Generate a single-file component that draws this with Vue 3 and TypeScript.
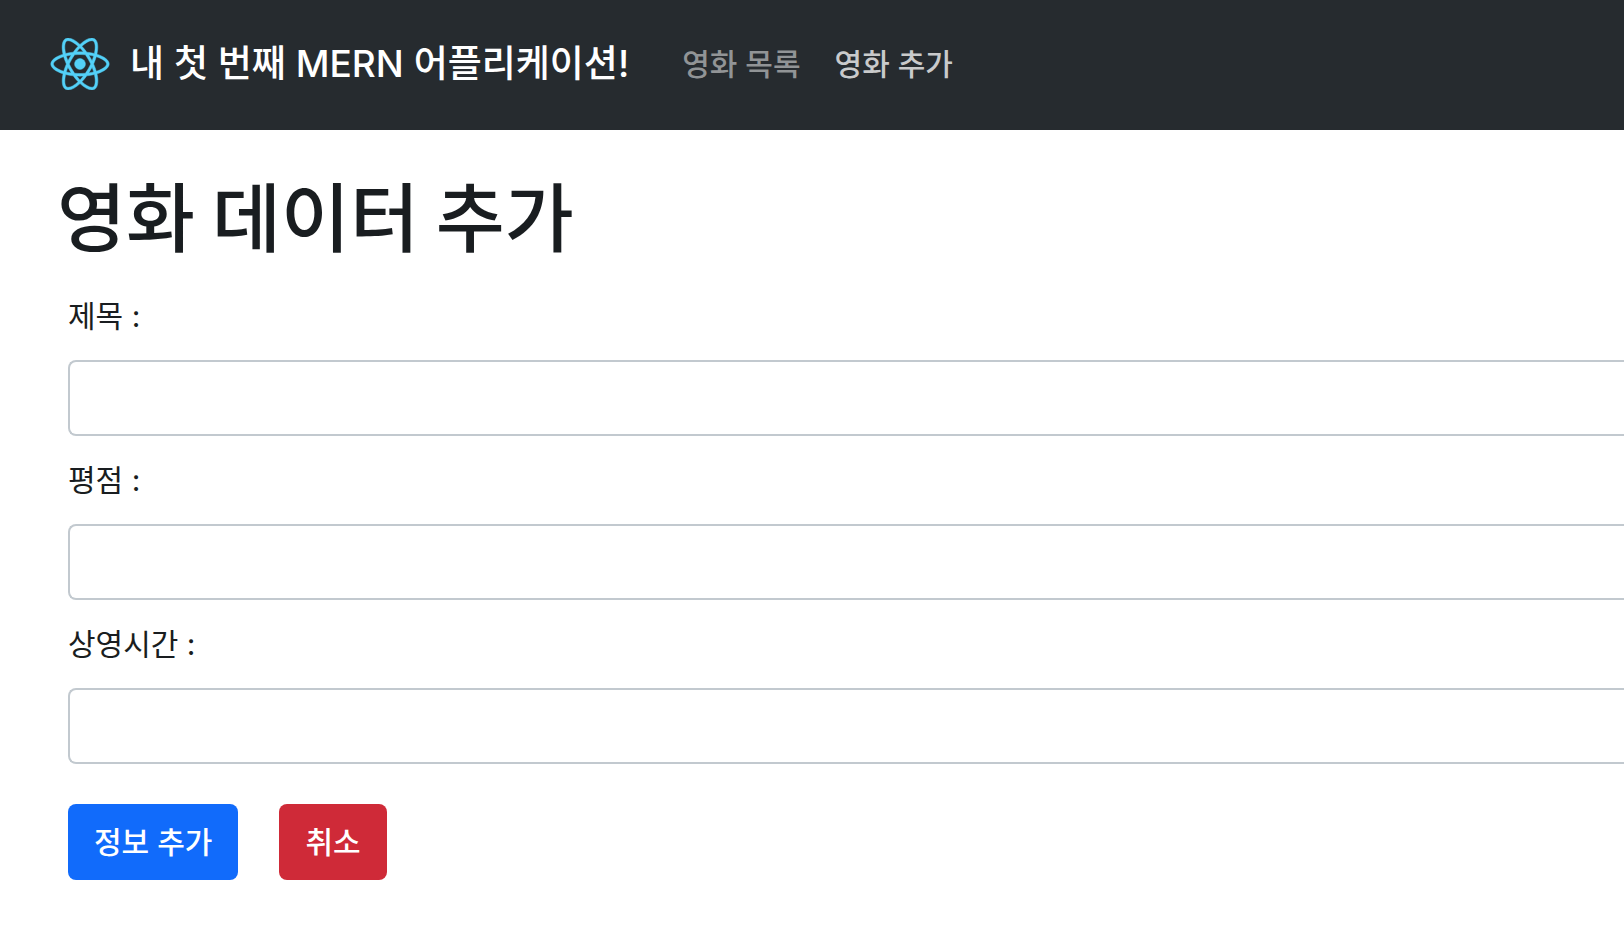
<script setup lang="ts">
import { reactive } from 'vue'

interface Field {
  id: 'name' | 'rating' | 'time'
  label: string
}

const fields: Field[] = [
  { id: 'name', label: '제목 :' },
  { id: 'rating', label: '평점 :' },
  { id: 'time', label: '상영시간 :' },
]

const movie = reactive({ name: '', rating: '', time: '' })

function reset() {
  movie.name = ''
  movie.rating = ''
  movie.time = ''
}
</script>

<template>
  <div class="page">
    <nav class="navbar">
      <a class="logo" href="#" aria-label="React">
        <svg viewBox="175 78 492 437" fill="#53d1f8" stroke="#53d1f8" stroke-width="4" aria-hidden="true">
          <path d="M666.3 296.5c0-32.5-40.7-63.3-103.1-82.4 14.4-63.6 8-114.2-20.2-130.4-6.5-3.8-14.1-5.6-22.4-5.6v22.3c4.6 0 8.3.9 11.4 2.6 13.6 7.8 19.5 37.5 14.9 75.7-1.1 9.4-2.9 19.3-5.1 29.4-19.6-4.8-41-8.5-63.5-10.9-13.5-18.5-27.5-35.3-41.6-50 32.6-30.3 63.2-46.9 84-46.9V78c-27.5 0-63.5 19.6-99.9 53.6-36.4-33.8-72.4-53.2-99.9-53.2v22.3c20.7 0 51.4 16.5 84 46.6-14 14.7-28 31.4-41.3 49.9-22.6 2.4-44 6.1-63.6 11-2.3-10-4-19.7-5.2-29-4.7-38.2 1.1-67.9 14.6-75.8 3-1.8 6.9-2.6 11.5-2.6V78.5c-8.4 0-16 1.8-22.6 5.6-28.1 16.2-34.4 66.7-19.9 130.1-62.2 19.2-102.7 49.9-102.7 82.3 0 32.5 40.7 63.3 103.1 82.4-14.4 63.6-8 114.2 20.2 130.4 6.5 3.8 14.1 5.6 22.5 5.6 27.5 0 63.5-19.6 99.9-53.6 36.4 33.8 72.4 53.2 99.9 53.2 8.4 0 16-1.8 22.6-5.6 28.1-16.2 34.4-66.7 19.9-130.1 62-19.1 102.5-49.9 102.5-82.3zm-130.2-66.7c-3.7 12.9-8.3 26.2-13.5 39.5-4.1-8-8.4-16-13.1-24-4.6-8-9.5-15.8-14.4-23.4 14.2 2.1 27.9 4.7 41 7.9zm-45.8 106.5c-7.8 13.5-15.8 26.3-24.1 38.2-14.9 1.3-30 2-45.2 2-15.1 0-30.2-.7-45-1.9-8.3-11.9-16.4-24.6-24.2-38-7.6-13.1-14.5-26.4-20.8-39.8 6.2-13.4 13.2-26.8 20.7-39.9 7.8-13.5 15.8-26.3 24.1-38.2 14.9-1.3 30-2 45.2-2 15.1 0 30.2.7 45 1.9 8.3 11.9 16.4 24.6 24.2 38 7.6 13.1 14.5 26.4 20.8 39.8-6.3 13.4-13.2 26.8-20.7 39.9zm32.3-13c5.4 13.4 10 26.8 13.8 39.8-13.1 3.2-26.9 5.9-41.2 8 4.9-7.7 9.8-15.6 14.4-23.7 4.6-8 8.9-16.1 13-24.1zM421.2 430c-9.3-9.6-18.6-20.3-27.8-32 9 .4 18.2.7 27.5.7 9.4 0 18.7-.2 27.8-.7-9 11.7-18.3 22.4-27.5 32zm-74.4-58.9c-14.2-2.1-27.9-4.7-41-7.9 3.7-12.9 8.3-26.2 13.5-39.5 4.1 8 8.4 16 13.1 24 4.7 8 9.5 15.8 14.4 23.4zM420.7 163c9.3 9.6 18.6 20.3 27.8 32-9-.4-18.2-.7-27.5-.7-9.4 0-18.7.2-27.8.7 9-11.7 18.3-22.4 27.5-32zm-74 58.9c-4.9 7.7-9.8 15.6-14.4 23.7-4.6 8-8.9 16-13 24-5.4-13.4-10-26.8-13.8-39.8 13.1-3.1 26.9-5.8 41.2-7.9zm-90.5 125.2c-35.4-15.1-58.3-34.9-58.3-50.6 0-15.7 22.9-35.6 58.3-50.6 8.6-3.7 18-7 27.7-10.1 5.7 19.6 13.2 40 22.5 60.9-9.2 20.8-16.6 41.1-22.2 60.6-9.9-3.1-19.3-6.5-28-10.2zM310 490c-13.6-7.8-19.5-37.5-14.9-75.7 1.1-9.4 2.9-19.3 5.1-29.4 19.6 4.8 41 8.5 63.5 10.9 13.5 18.5 27.5 35.3 41.6 50-32.6 30.3-63.2 46.9-84 46.9-4.5-.1-8.3-1-11.3-2.7zm237.2-76.2c4.7 38.2-1.1 67.9-14.6 75.8-3 1.8-6.9 2.6-11.5 2.6-20.7 0-51.4-16.5-84-46.6 14-14.7 28-31.4 41.3-49.9 22.6-2.4 44-6.1 63.6-11 2.3 10.1 4.1 19.8 5.2 29.1zm38.5-66.7c-8.6 3.7-18 7-27.7 10.1-5.7-19.6-13.2-40-22.5-60.9 9.2-20.8 16.6-41.1 22.2-60.6 9.9 3.1 19.3 6.5 28.1 10.2 35.4 15.1 58.3 34.9 58.3 50.6-.1 15.7-23 35.6-58.4 50.6z" />
          <circle cx="420.9" cy="296.5" r="45.7" />
        </svg>
      </a>
      <a class="brand" href="#">내 첫 번째 MERN 어플리케이션!</a>
      <div class="links">
        <a class="link" href="#list">영화 목록</a>
        <a class="link current" href="#create">영화 추가</a>
      </div>
    </nav>

    <main class="content">
      <h1 class="title">영화 데이터 추가</h1>
      <form class="form" @submit.prevent>
        <div v-for="field in fields" :key="field.id" class="field">
          <label class="label" :for="field.id">{{ field.label }}</label>
          <input :id="field.id" v-model="movie[field.id]" class="input" type="text" />
        </div>
        <div class="actions">
          <button class="button primary" type="submit">정보 추가</button>
          <button class="button danger" type="button" @click="reset">취소</button>
        </div>
      </form>
    </main>
  </div>
</template>

<style>
body {
  background: #fff;
}
</style>

<style scoped>
.page {
  font-family: Inter, 'Noto Sans CJK KR', sans-serif;
  font-size: 30px;
  line-height: 48px;
  color: #191d20;
}

.navbar {
  display: flex;
  align-items: center;
  box-sizing: border-box;
  min-height: 130px;
  padding: 0 50px 2px;
  background: #262b2f;
  font-weight: 500;
}

.navbar a {
  text-decoration: none;
}

.logo svg {
  display: block;
  width: 60px;
  height: 52px;
}

.brand {
  margin-left: 20px;
  font-size: 37px;
  line-height: 60px;
  color: #fff;
  white-space: nowrap;
}

.links {
  display: flex;
  gap: 34px;
  margin-left: 53px;
  white-space: nowrap;
}

.link {
  color: #919496;
}

.link.current {
  color: #c9cacb;
}

.title {
  margin: 0;
  padding: 36px 57px 0;
  font-family: 'Noto Sans CJK KR', sans-serif;
  font-size: 75px;
  font-weight: 500;
  line-height: 96px;
}

.form {
  padding: 30px 0 48px 68px;
}

.field {
  display: flex;
  flex-direction: column;
  gap: 20px;
  margin-bottom: 20px;
}

.input {
  box-sizing: border-box;
  width: 100%;
  height: 76px;
  padding: 12px 24px;
  border: 2px solid #c2c9cf;
  border-right: 0;
  border-radius: 8px 0 0 8px;
  background: #fff;
  color: inherit;
  font: inherit;
}

.actions {
  display: flex;
  gap: 41px;
  padding-top: 20px;
}

.button {
  height: 76px;
  padding: 0 26px;
  border: 0;
  border-radius: 8px;
  color: #fff;
  font: inherit;
  font-weight: 500;
  cursor: pointer;
}

.primary {
  background: #116bfb;
}

.danger {
  background: #cf2a38;
}
</style>
